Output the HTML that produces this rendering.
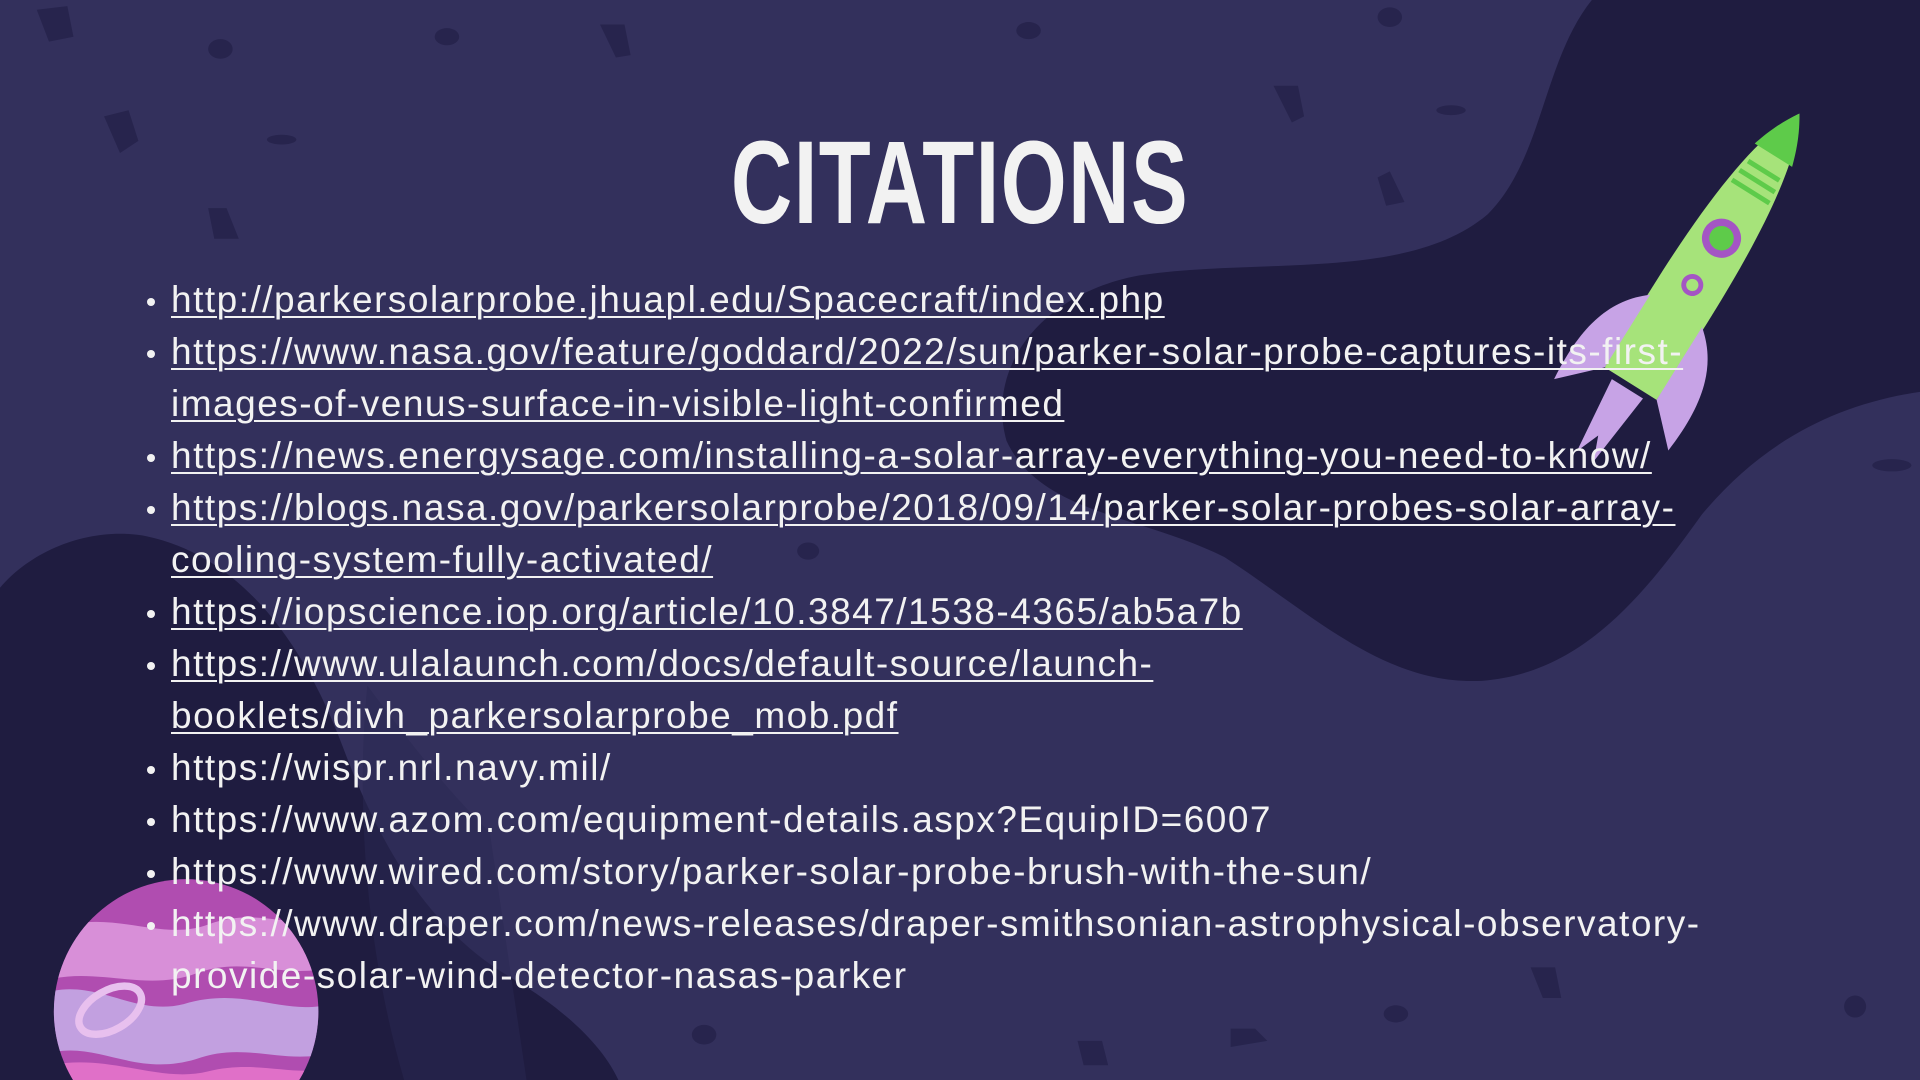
<!DOCTYPE html>
<html><head><meta charset="utf-8"><style>
html,body{margin:0;padding:0;overflow:hidden}
body{width:1920px;height:1080px;overflow:hidden;background:#33305c;position:relative;font-family:"Liberation Sans",sans-serif}
svg.bg{position:absolute;left:0;top:0;display:block}
h1{position:absolute;left:0;width:1920px;top:124px;margin:0;text-align:center;color:#f2f2f2;font-family:"Liberation Sans",sans-serif;font-weight:bold;font-size:118px;letter-spacing:2px;transform:scaleX(0.72);line-height:1}
ul{position:absolute;left:171px;top:274px;margin:0;padding:0;list-style:none;width:1600px}
li{position:relative;color:#f2f2f2;font-size:37px;line-height:52px;letter-spacing:1.5px;white-space:nowrap}
li:before{content:"";position:absolute;left:-24px;top:24px;width:8px;height:8px;border-radius:50%;background:#f2f2f2}
li.u{text-decoration:underline;text-underline-offset:4px;text-decoration-thickness:2px}
</style></head><body>
<svg class="bg" width="1920" height="1080" viewBox="0 0 1568 882">
<path fill="#1f1c40" d="M1300,0 L1568,0 L1568,320 C1500,330 1440,360 1390,420 C1340,490 1290,550 1210,556 C1130,560 1070,500 1000,455 C930,420 850,420 822,360 C805,300 850,240 930,225 C1030,210 1150,230 1215,175 C1260,130 1260,50 1300,0 Z"/>
<path fill="#1f1c40" d="M0,480 C30,445 80,430 120,438 C200,455 250,530 280,610 C310,690 350,760 420,800 C470,830 495,860 505,882 L0,882 Z"/>
<path fill="#2a2752" d="M300,560 C330,600 360,640 400,680 L430,882 L330,882 C300,780 290,660 300,560Z" opacity="0.5"/>
<g fill="#27244d">
<path d="M30,8 l25,-3 l5,25 l-20,4z"/><path d="M85,95 l20,-5 l8,25 l-15,10z"/><path d="M170,170 l15,0 l10,25 l-20,0z"/><path d="M490,20 l20,0 l5,25 l-12,2z"/><path d="M1040,70 l20,0 l5,25 l-10,5z"/><path d="M1125,145 l10,-5 l12,25 l-15,3z"/><path d="M880,850 l20,0 l5,20 l-20,0z"/><path d="M1250,790 l20,0 l5,25 l-15,0z"/><path d="M1005,840 l20,0 l10,10 l-30,5z"/>
<ellipse cx="180" cy="40" rx="10" ry="8"/><ellipse cx="365" cy="30" rx="10" ry="7"/><ellipse cx="840" cy="25" rx="10" ry="7"/><ellipse cx="1135" cy="14" rx="10" ry="8"/><ellipse cx="230" cy="114" rx="12" ry="4"/><ellipse cx="1185" cy="90" rx="12" ry="4"/><ellipse cx="660" cy="450" rx="9" ry="7"/><ellipse cx="1515" cy="822" rx="9" ry="9"/><ellipse cx="575" cy="845" rx="10" ry="8"/><ellipse cx="1545" cy="380" rx="16" ry="5"/><ellipse cx="1140" cy="828" rx="10" ry="7"/>
</g>
<circle cx="152" cy="826" r="108" fill="#b04db0"/>
<clipPath id="pc"><circle cx="152" cy="826" r="108"/></clipPath>
<g clip-path="url(#pc)">
<path d="M40,760 C90,740 130,770 170,755 C210,740 240,760 270,750 L270,790 C230,800 200,780 160,795 C120,810 80,790 40,800Z" fill="#d88fd8"/>
<path d="M40,810 C80,800 110,830 150,820 C200,805 230,830 270,820 L270,860 C230,870 200,850 160,865 C110,880 80,850 40,860Z" fill="#c2a0e0"/>
<path d="M40,870 C90,860 130,885 170,875 C210,865 240,880 270,872 L270,940 L40,940Z" fill="#e070c8"/>
<ellipse cx="90" cy="825" rx="28" ry="16" fill="none" stroke="#e8c0ee" stroke-width="6" transform="rotate(-30 90 825)"/>
</g>
<g transform="translate(30,10) rotate(32 1360 210)">
<path d="M1360,60 C1385,100 1390,200 1385,320 L1335,320 C1330,200 1335,100 1360,60Z" fill="#a6e37a"/>
<path d="M1360,60 C1370,75 1375,90 1378,100 L1342,100 C1345,90 1350,75 1360,60Z" fill="#5ecb4a"/>
<path d="M1345,115 h30 M1343,125 h34 M1342,135 h36" stroke="#5ecb4a" stroke-width="4"/>
<circle cx="1360" cy="180" r="16" fill="#a455c4"/><circle cx="1360" cy="180" r="10" fill="#5ecb4a"/>
<circle cx="1360" cy="225" r="9" fill="#a455c4"/><circle cx="1360" cy="225" r="5" fill="#a6e37a"/>
<path d="M1335,250 C1310,270 1300,300 1305,350 L1335,320Z" fill="#c7a3e6"/>
<path d="M1385,250 C1410,270 1420,300 1415,350 L1385,320Z" fill="#c7a3e6"/>
<path d="M1345,325 L1375,325 L1368,390 L1360,370 L1352,390Z" fill="#c7a3e6"/>
</g>
</svg>
<h1>CITATIONS</h1>
<ul>
<li class="u">http://parkersolarprobe.jhuapl.edu/Spacecraft/index.php</li>
<li class="u">https://www.nasa.gov/feature/goddard/2022/sun/parker-solar-probe-captures-its-first-<br>images-of-venus-surface-in-visible-light-confirmed</li>
<li class="u">https://news.energysage.com/installing-a-solar-array-everything-you-need-to-know/</li>
<li class="u">https://blogs.nasa.gov/parkersolarprobe/2018/09/14/parker-solar-probes-solar-array-<br>cooling-system-fully-activated/</li>
<li class="u">https://iopscience.iop.org/article/10.3847/1538-4365/ab5a7b</li>
<li class="u">https://www.ulalaunch.com/docs/default-source/launch-<br>booklets/divh_parkersolarprobe_mob.pdf </li>
<li>https://wispr.nrl.navy.mil/</li>
<li>https://www.azom.com/equipment-details.aspx?EquipID=6007</li>
<li>https://www.wired.com/story/parker-solar-probe-brush-with-the-sun/</li>
<li>https://www.draper.com/news-releases/draper-smithsonian-astrophysical-observatory-<br>provide-solar-wind-detector-nasas-parker</li>
</ul>
</body></html>
